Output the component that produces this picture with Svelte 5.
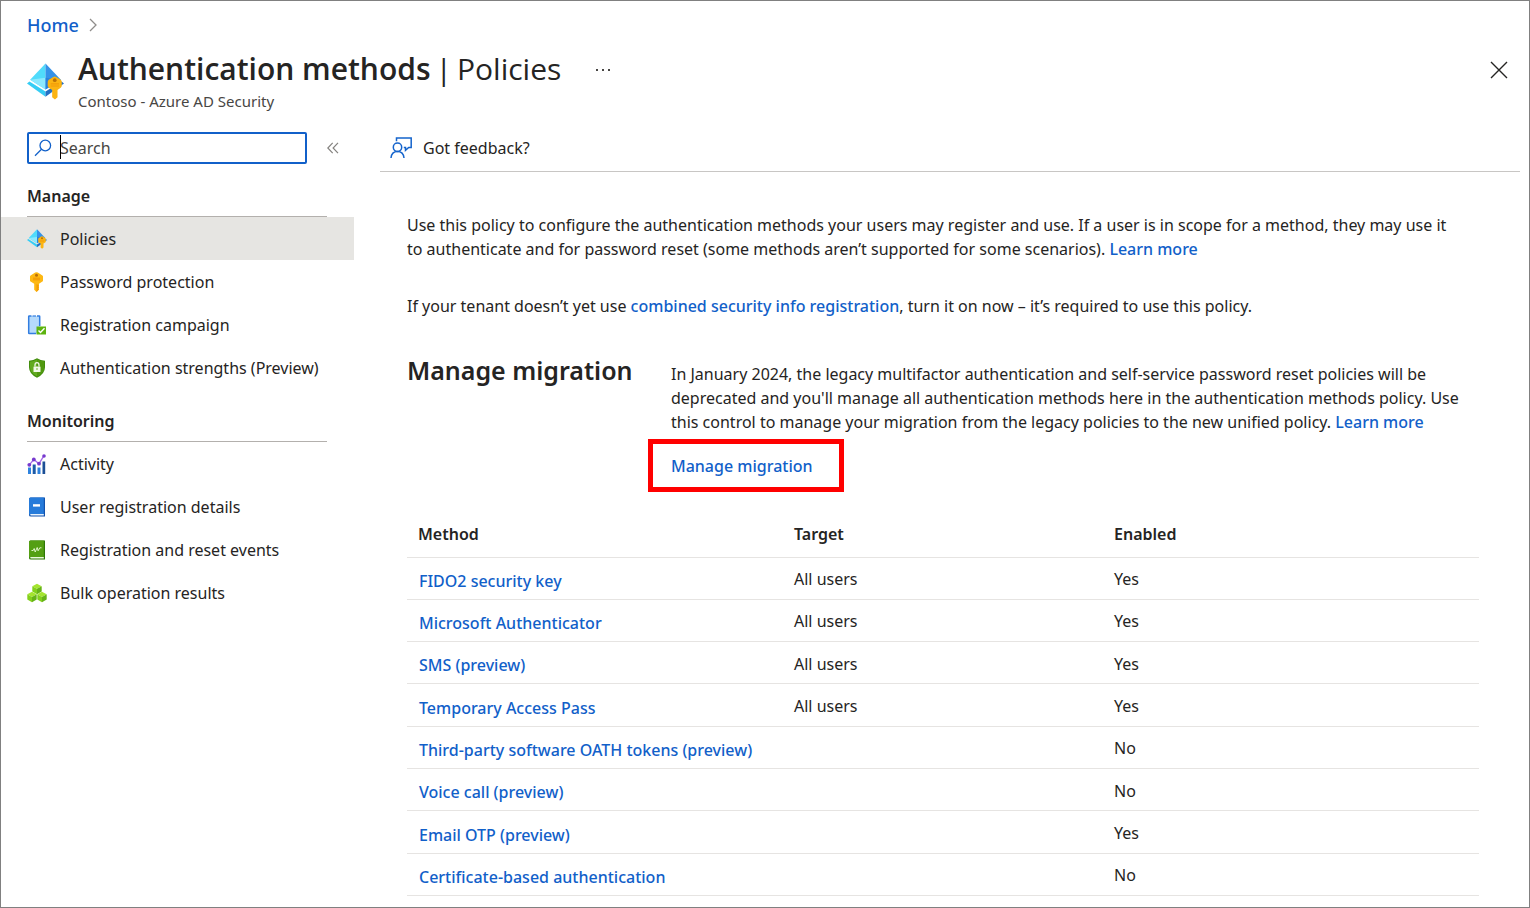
<script>
  const manage = [
    { label: 'Policies', icon: 'policy', active: true },
    { label: 'Password protection', icon: 'key' },
    { label: 'Registration campaign', icon: 'campaign' },
    { label: 'Authentication strengths (Preview)', icon: 'shield' }
  ];
  const monitoring = [
    { label: 'Activity', icon: 'chart' },
    { label: 'User registration details', icon: 'book' },
    { label: 'Registration and reset events', icon: 'log' },
    { label: 'Bulk operation results', icon: 'cubes' }
  ];
  const groups = [
    { title: 'Manage', items: manage },
    { title: 'Monitoring', items: monitoring }
  ];
  const methods = [
    ['FIDO2 security key', 'All users', 'Yes'],
    ['Microsoft Authenticator', 'All users', 'Yes'],
    ['SMS (preview)', 'All users', 'Yes'],
    ['Temporary Access Pass', 'All users', 'Yes'],
    ['Third-party software OATH tokens (preview)', '', 'No'],
    ['Voice call (preview)', '', 'No'],
    ['Email OTP (preview)', '', 'Yes'],
    ['Certificate-based authentication', '', 'No']
  ];
</script>

{#snippet cube(x, y)}
  <path d="M{x} {y}l4.7-2.500 4.700 2.500-4.700 2.600z" fill="#a4e52e" />
  <path d="M{x} {y}l4.700 2.600v5.400L{x} {y + 5.300}z" fill="#83d01b" />
  <path d="M{x + 9.400} {y}l-4.700 2.600v5.400l4.700-2.700z" fill="#66b317" />
{/snippet}

{#snippet icon(name)}
  <svg class="icon" viewBox="0 0 20 20" aria-hidden="true">
    {#if name === 'policy'}
      <path d="M0 11.100 1.300 10 10 15.400v2.800z" fill="#35cdf5" />
      <path d="M10 18.200 20 11.100 18.700 10 10 15.400z" fill="#2470c4" />
      <path d="M10 .3v14L1.700 9.100z" fill="#50dbfb" />
      <path d="M10 .3v14l8.300-5.200z" fill="#3592e8" />
      <path d="M1.700 9.100 10 8v6.300z" fill="#8be9ff" />
      <path d="M10 14.300V8l8.300 1.100z" fill="#2a82dc" />
      <path d="M11.200 10.300q0-.7.600-1.200l2.400-1.500q.8-.5 1.600 0l2.400 1.500q.6.500.6 1.200v1.900q0 .7-.6 1.200l-1.700 1.200v3.900L15.100 19.700l-1.500-1.200v-3.900l-1.800-1.200q-.6-.5-.6-1.200z" fill="#fbb413" />
      <circle cx="15" cy="9.300" r="1" fill="#b97208" />
      <path d="M12.800 11.300h4.500M12.800 12.400h4.500" stroke="#f29a08" stroke-width=".6" />
    {:else if name === 'key'}
      <path d="M3 4.600q0-.8.600-1.200L8.200.5q1.300-.7 2.600 0l4.600 2.900q.6.500.6 1.200v3.800q0 .7-.6 1.200L12 11.800v5.800L9.500 20 7.200 17.700V11.800L3.600 9.600q-.6-.5-.6-1.200z" fill="#fdb813" />
      <path d="M9.500 12v8l2.500-2.400-1.200-1.100 1.200-1.200-1-1.100 1-1z" fill="#f39c08" />
      <path d="M6 6.200h7M6 7.800h7" stroke="#ef9100" stroke-width=".9" />
      <circle cx="9.500" cy="3.200" r="1.500" fill="#b86d08" />
    {:else if name === 'campaign'}
      <rect x="1.700" y="1" width="11" height="17.500" rx=".6" fill="#b5dafb" />
      <path d="M4.500 1H2.200q-.5 0-.5.500V18q0 .5.500.5H9M10 1h2.200q.5 0 .5.500V11" fill="none" stroke="#327de0" stroke-width="1.500" />
      <path d="M5.500 1H9" stroke="#327de0" stroke-width="1.200" />
      <rect x="9.500" y="11.500" width="9.500" height="8" fill="#5db30f" />
      <path d="m11.500 15.500 2 2 4-4.200" fill="none" stroke="#fff" stroke-width="1.400" />
    {:else if name === 'shield'}
      <path d="M10 .3q3.500 2.400 8 2.400v6.500q0 6.500-8 10.500-8-4-8-10.500V2.700q4.500 0 8-2.400z" fill="#428d0c" />
      <path d="M10 1.500q3.200 2 7 2.200v5.500q0 5.500-7 9.200-7-3.700-7-9.200V3.700q3.800-.2 7-2.200z" fill="#62ab20" />
      <path d="M10 1.500v16.900q7-3.700 7-9.200V3.700q-3.800-.2-7-2.200z" fill="#50980f" />
      <rect x="6.500" y="8.500" width="7" height="5.500" rx=".5" fill="#f2f8ea" />
      <path d="M8 8.500V7a2 2.300 0 0 1 4 0v1.500" fill="none" stroke="#f2f8ea" stroke-width="1.300" />
      <circle cx="10" cy="11" r=".8" fill="#62ab20" />
    {:else if name === 'chart'}
      <path d="M1 13.500h3V20H1z" fill="#2e83df" />
      <path d="M5.700 10.500h3V20h-3z" fill="#1c5ba8" />
      <path d="M10.500 13.500h3V20h-3z" fill="#2e83df" />
      <path d="M15.500 7.500h2.700V20h-2.700z" fill="#1b4f96" />
      <path d="m2.300 10.800 4.500-5.300 5.200 4.200 5-8" fill="none" stroke="#a56be8" stroke-width="1.300" />
      <g fill="#7739ce"><circle cx="2.300" cy="10.800" r="1.900" /><circle cx="6.800" cy="5.500" r="1.900" /><circle cx="12" cy="9.700" r="1.900" /><circle cx="17" cy="2" r="1.800" /></g>
    {:else if name === 'book'}
      <path d="M3.500.5H18v19H4q-2 0-2-1.500V2Q2 .5 3.500.5z" fill="#1252ad" />
      <path d="M3.200 17h13.600v1.500H4.200q-1.200 0-1-1.500z" fill="#e9f3fd" />
      <path d="M2 2Q2 .5 3.500.5h13.300V17H4q-1.400 0-2 1z" fill="#267bda" />
      <path d="M6 7.200h7v2.400H6z" fill="#fff" />
    {:else if name === 'log'}
      <path d="M3.500.5H18v19H4q-2 0-2-1.500V2Q2 .5 3.500.5z" fill="#2f7807" />
      <path d="M3.200 17h13.600v1.500H4.200q-1.200 0-1-1.500z" fill="#e9f8dc" />
      <path d="M2 2Q2 .5 3.500.5h13.300V17H4q-1.400 0-2 1z" fill="#549f13" />
      <path d="M4.500 10.500h1.700l1-2 1 3.500 2-4.500.9 3.300 1.700-3h1.700" fill="none" stroke="#dff4c8" stroke-width="1" />
    {:else}
      {@render cube(5.300, 3.200)}
      {@render cube(0.300, 11.300)}
      {@render cube(10.300, 11.300)}
    {/if}
  </svg>
{/snippet}

<div class="page">
  <nav class="crumbs" aria-label="Breadcrumb">
    <a href="#home">Home</a>
    <svg width="8" height="14" viewBox="0 0 8 14" aria-hidden="true"><path d="m1 1 6 6-6 6" fill="none" stroke="#8f8d8b" stroke-width="1.300" /></svg>
  </nav>

  <header>
    <div class="logo">{@render icon('policy')}</div>
    <div class="heading">
      <h1><b>Authentication methods</b> <span>|</span> <span>Policies</span></h1>
      <p>Contoso - Azure AD Security</p>
    </div>
    <button class="more" aria-label="More">
      <svg width="16" height="4" viewBox="0 0 16 4" aria-hidden="true"><path d="M1 1h2v2H1zM7 1h2v2H7zM13 1h2v2h-2z" fill="#484644" /></svg>
    </button>
    <button class="close" aria-label="Close">
      <svg width="18" height="18" viewBox="0 0 18 18" aria-hidden="true"><path d="m1 1 16 16M17 1 1 17" stroke="#252423" stroke-width="1.400" /></svg>
    </button>
  </header>

  <div class="body">
    <aside>
      <div class="tools">
        <div class="search">
          <svg width="18" height="18" viewBox="0 0 18 18" aria-hidden="true"><g fill="none" stroke="#1160c9" stroke-width="1.300"><circle cx="11.300" cy="6.500" r="5.300" /><path d="m7.500 10.300-6.500 6.500" /></g></svg>
          <input type="text" placeholder="Search" aria-label="Search" />
          <i class="caret"></i>
        </div>
        <button class="collapse" aria-label="Collapse menu">
          <svg width="12" height="12" viewBox="0 0 12 12" aria-hidden="true"><path d="M5.700.8.800 6l4.900 5.200M11 .8 6.100 6l4.900 5.200" fill="none" stroke="#84827f" stroke-width="1.200" /></svg>
        </button>
      </div>
      {#each groups as group}
        <section class="group">
          <h2>{group.title}</h2>
          <ul>
            {#each group.items as item}
              <li><a href="#{item.icon}" class:active={item.active}>{@render icon(item.icon)}{item.label}</a></li>
            {/each}
          </ul>
        </section>
      {/each}
    </aside>

    <main>
      <div class="commands">
        <button class="feedback">
          <svg width="22" height="22" viewBox="0 0 22 22" aria-hidden="true"><g fill="none" stroke="#1564cc" stroke-width="1.500"><circle cx="7.500" cy="10.300" r="4.200" /><path d="M1 21q.6-6.500 6.500-6.500T14 21" /><path d="M6.500 4.200V1h14.700v9.500h-2.500L15.500 13.300V10.500h-1.700" /></g></svg>
          Got feedback?
        </button>
      </div>
      <div class="content">
        <p class="intro">Use this policy to configure the authentication methods your users may register and use. If a user is in scope for a method, they may use it to authenticate and for password reset (some methods aren’t supported for some scenarios). <a href="#learn">Learn more</a></p>
        <p class="tenant">If your tenant doesn’t yet use <a href="#combined">combined security info registration</a>, turn it on now – it’s required to use this policy.</p>

        <section class="migration">
          <h2>Manage migration</h2>
          <div>
            <p>In January 2024, the legacy multifactor authentication and self-service password reset policies will be deprecated and you'll manage all authentication methods here in the authentication methods policy. Use this control to manage your migration from the legacy policies to the new unified policy. <a href="#migration">Learn more</a></p>
            <a class="boxed" href="#manage">Manage migration</a>
          </div>
        </section>

        <table>
          <thead>
            <tr><th>Method</th><th>Target</th><th>Enabled</th></tr>
          </thead>
          <tbody>
            {#each methods as [name, target, enabled]}
              <tr><td><a href="#method">{name}</a></td><td>{target}</td><td>{enabled}</td></tr>
            {/each}
          </tbody>
        </table>
      </div>
    </main>
  </div>
</div>

<style>
  :global(body) { margin: 0; background: #fff; }
  .page, .page * { box-sizing: border-box; }
  .page {
    min-height: 100vh;
    border: 1px solid #808080;
    font: 16px/24px 'Noto Sans', 'Open Sans', sans-serif;
    color: #252423;
  }
  h1, h2, p, ul { margin: 0; padding: 0; }
  ul { list-style: none; }
  a { color: #1160c9; text-decoration: none; font-weight: 500; }
  button { border: 0; padding: 0; background: none; font: inherit; color: inherit; }
  svg { display: block; flex: none; }
  .icon { width: 20px; height: 20px; }

  .crumbs { display: flex; align-items: center; gap: 10px; height: 48px; padding-left: 26px; font-size: 18px; }
  header { display: flex; align-items: flex-start; height: 83px; padding: 0 21px 0 26px; }
  .logo { padding-top: 14px; }
  .logo .icon { width: 37px; height: 37px; }
  .heading { padding-left: 14px; }
  h1 { display: flex; gap: 5px; font-family: 'Open Sans', 'Noto Sans', sans-serif; font-size: 30px; line-height: 40px; font-weight: 400; white-space: nowrap; }
  h1 b { font-weight: 600; }
  .heading p { font-size: 15px; color: #484644; }
  .more { padding: 19px 0 0 34px; }
  .close { margin-left: auto; padding-top: 12px; }

  .body { display: flex; align-items: flex-start; }
  aside { width: 353px; flex: none; }
  .tools { display: flex; align-items: center; gap: 20px; padding-left: 26px; height: 32px; }
  .search { position: relative; display: flex; align-items: center; gap: 8px; width: 280px; height: 32px; padding-left: 5px; border: 2px solid #1160c9; border-radius: 2px; }
  .search input { flex: 1; min-width: 0; border: 0; outline: 0; padding: 0; background: none; font: inherit; color: #252423; }
  .search input::placeholder { color: #484644; opacity: 1; }
  .caret { position: absolute; left: 31px; top: 1px; width: 1px; height: 24px; background: #000; }
  .group { padding-top: 20px; }
  .group h2 { width: 300px; height: 33px; margin-left: 26px; border-bottom: 1px solid #b3b0ad; font-size: 16px; line-height: 24px; font-weight: 600; }
  .group li a { display: flex; align-items: center; gap: 13px; height: 43px; padding-left: 26px; color: #252423; font-weight: 400; }
  .group li a.active { background: #e6e5e2; }

  main { flex: 1; min-width: 0; padding: 0 9px 0 26px; }
  .commands { height: 40px; border-bottom: 1px solid #c8c6c4; padding-left: 10px; }
  .feedback { display: flex; align-items: center; gap: 11px; height: 32px; }
  .content { padding: 41px 41px 0 27px; }
  .intro { padding-right: 20px; }
  .tenant { padding-top: 33px; }
  .migration { display: flex; padding-top: 40px; }
  .migration h2 { width: 264px; flex: none; font-size: 25px; line-height: 24px; font-weight: 600; white-space: nowrap; }
  .migration p { padding-top: 4px; }
  .boxed { display: inline-block; margin: 5px 0 0 -23px; padding: 10px 26px 9px 18px; border: 5px solid #f00; }

  table { width: 100%; height: 387px; margin-top: 17px; border-collapse: collapse; table-layout: fixed; text-align: left; }
  th { height: 48px; font-weight: 600; }
  th, td { padding: 2px 0 0 11px; border-bottom: 1px solid #e6e4e2; }
  th:first-child, td:first-child { width: 376px; }
  th:nth-child(2), td:nth-child(2) { width: 320px; }
  td a { display: inline-block; padding: 3px 0 0 1px; }
</style>
